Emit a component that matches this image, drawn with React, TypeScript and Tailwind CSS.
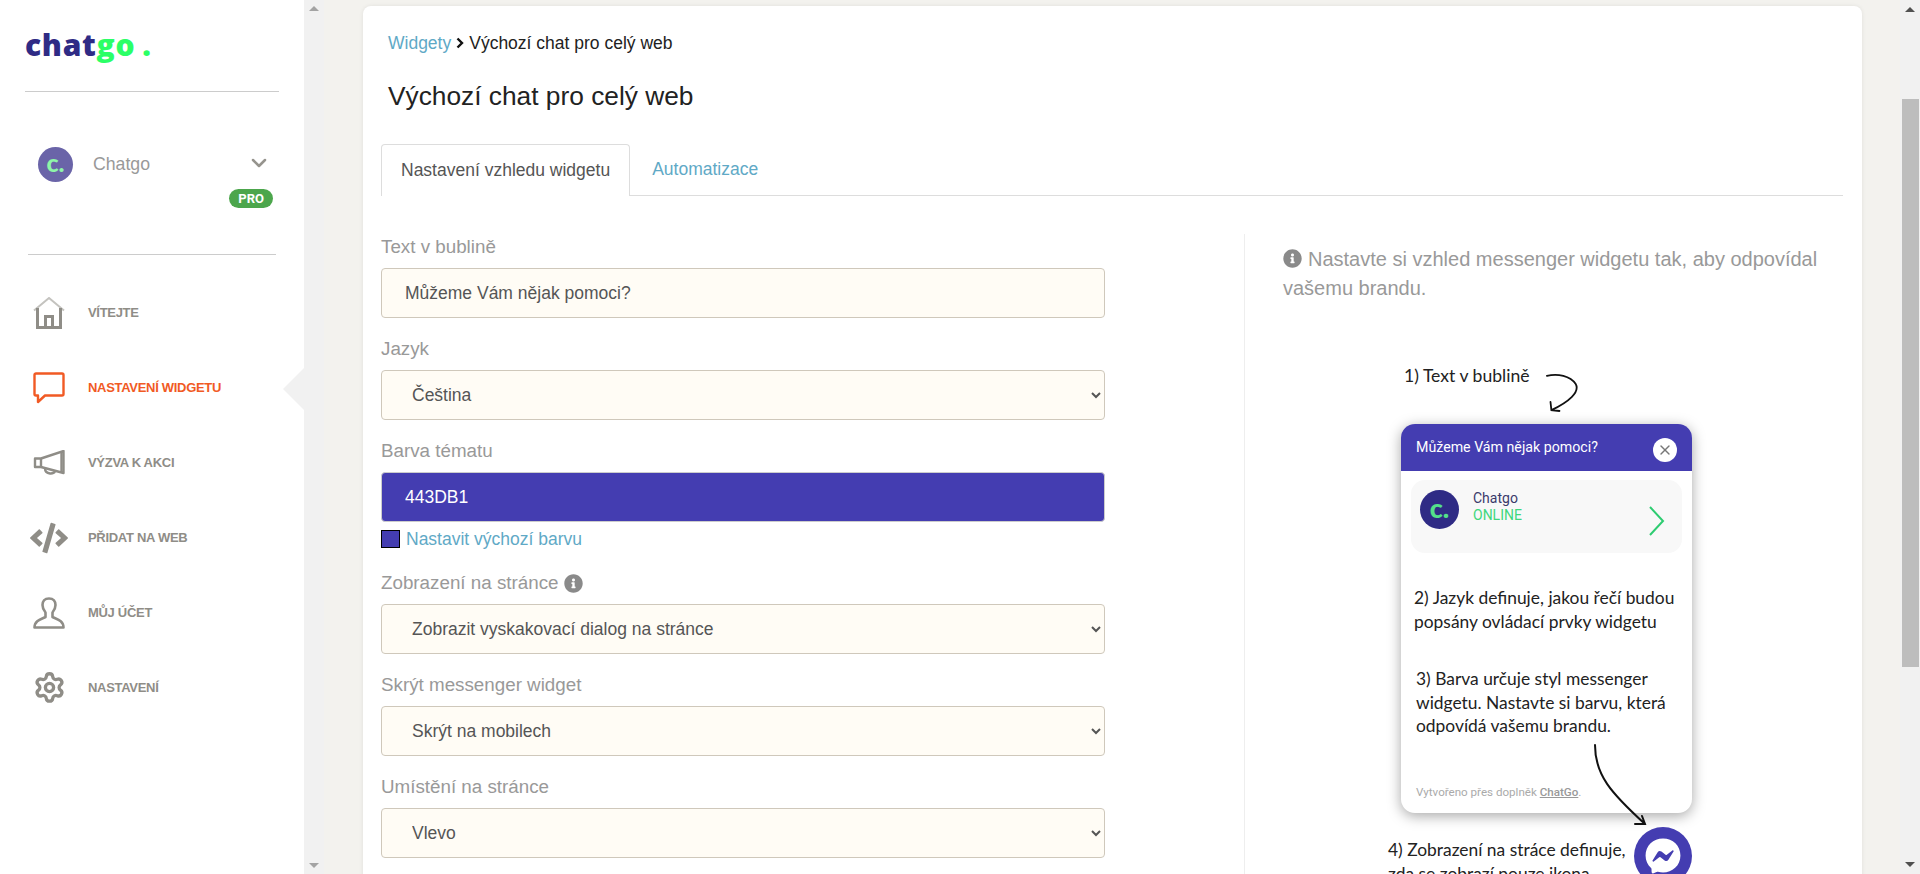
import React from 'react';
import { ChevronDown, Settings, X } from 'lucide-react';
import { FaCode, FaFacebookMessenger, FaInfoCircle } from 'react-icons/fa';

const HomeIcon = ({ className }: { className?: string }) => (
  <svg viewBox="0 0 32 32" className={className} fill="none" stroke="currentColor">
    <path d="M1 13.500 16 1l15 12.500" stroke="#c4c3bf" strokeWidth="2" />
    <path d="M4.500 11v19.500h23V11" strokeWidth="3" />
    <path d="M12.500 30V19.500h7V30" strokeWidth="3" />
  </svg>
);

const BubbleIcon = ({ className }: { className?: string }) => (
  <svg viewBox="0 0 32 32" className={className} fill="none" stroke="currentColor" strokeWidth="2.400">
    <path d="M3 1.500h26a1.500 1.500 0 0 1 1.500 1.500v19a1.500 1.500 0 0 1-1.500 1.500H12L5 30v-6.500H3A1.500 1.500 0 0 1 1.500 22V3A1.500 1.500 0 0 1 3 1.500z" strokeLinejoin="round" />
  </svg>
);

const MegaphoneIcon = ({ className }: { className?: string }) => (
  <svg viewBox="0 0 32 26" className={className} fill="none" stroke="currentColor" strokeWidth="2.400">
    <path d="M30.500 1v22L8 17H2V8.500h6z" strokeLinejoin="round" />
    <path d="M8 8.500V17M28.500 2v20M12 18.500c0 6 10 6.500 10 2" />
  </svg>
);

const UserIcon = ({ className }: { className?: string }) => (
  <svg viewBox="0 0 32 32" className={className} fill="none" stroke="currentColor" strokeWidth="2.600">
    <path d="M16 1.500c-4.500 0-6.500 3-6.500 6.500 0 3 1.300 5.500 3 7.500v4.500C9 22 1.500 23 1.500 30.500h29C30.500 23 23 22 19.500 20v-4.500c1.700-2 3-4.500 3-7.500 0-3.500-2-6.500-6.500-6.500z" strokeLinejoin="round" />
  </svg>
);

const navItems = [
  { label: 'VÍTEJTE', icon: <HomeIcon className="w-8 h-8" /> },
  { label: 'NASTAVENÍ WIDGETU', icon: <BubbleIcon className="w-8 h-8" />, active: true },
  { label: 'VÝZVA K AKCI', icon: <MegaphoneIcon className="w-8 h-[26px]" /> },
  { label: 'PŘIDAT NA WEB', icon: <FaCode className="w-[38px] h-[38px]" /> },
  { label: 'MŮJ ÚČET', icon: <UserIcon className="w-8 h-8" /> },
  { label: 'NASTAVENÍ', icon: <Settings className="w-[33px] h-[33px]" strokeWidth={2.400} /> },
];

const inputClass =
  'w-full h-[50px] pl-[23px] rounded border border-[#cfc8bb] bg-[#fffcf5] text-[17.500px] text-[#555] outline-none';
const selectClass =
  'w-full h-[50px] pl-[26px] pr-1 rounded border border-[#cfc8bb] bg-[#fffcf5] text-[17.500px] text-[#555] outline-none';

const Field = ({ label, hint, children }: { label: string; hint?: boolean; children: React.ReactNode }) => (
  <div className="mb-[18px]">
    <div className="h-[26px] mb-2 flex items-center gap-[6px] text-[18.800px] leading-[26px] text-[#999]">
      {label}
      {hint && <FaInfoCircle className="w-[19px] h-[19px] text-[#8a8a8a]" />}
    </div>
    {children}
  </div>
);

const WidgetPreview = () => (
  <div className="relative h-[640px] mt-[43px] font-['Lato',sans-serif] text-[#222]">
    <div className="absolute left-[121px] top-[18px] text-[17.600px] leading-6 whitespace-nowrap">1) Text v bublině</div>
    <svg viewBox="0 0 40 44" className="absolute left-[263px] top-[27px] w-9 h-10" fill="none" stroke="#111" strokeWidth="2" strokeLinecap="round">
      <path d="M1 3c12-3 26 0 32 9 5 9-8 20-27 29M5 32l1 9 9 1" />
    </svg>

    <div className="absolute left-[118px] top-[78px] w-[291px] h-[389px] rounded-[14px] bg-white shadow-[0_3px_14px_rgba(0,0,0,0.35)] overflow-hidden">
      <div className="h-[47px] bg-[#443db1] flex items-center justify-between pl-[15px] pr-[15px] font-['Roboto',sans-serif] text-[14.200px] text-white">
        Můžeme Vám nějak pomoci?
        <span className="w-6 h-6 mt-1 rounded-full bg-white flex items-center justify-center">
          <X className="w-4 h-4 text-[#777]" />
        </span>
      </div>
      <div className="mx-[10px] mt-[9px] h-[73px] rounded-[14px] bg-[#f8f8f8] flex pl-[9px] pt-[10px] font-['Roboto',sans-serif]">
        <span className="w-[39px] h-[39px] rounded-full bg-[#2f2b85] flex items-center justify-center text-[#54e08a] text-[27px] leading-none pb-1 font-black font-['Lato',sans-serif]">c.</span>
        <div className="ml-[14px] text-[14px] leading-[17px]">
          <div className="text-[#3b3a6b]">Chatgo</div>
          <div className="text-[#3fd77c]">ONLINE</div>
        </div>
        <svg viewBox="0 0 16 30" className="ml-auto mr-[17px] mt-[16px] w-4 h-[30px]" fill="none" stroke="#2ecc71" strokeWidth="2">
          <path d="M1 1l13 14L1 29" />
        </svg>
      </div>
      <p className="ml-[13px] mt-[33px] text-[17.400px] leading-[23.500px]">
        2) Jazyk definuje, jakou řečí budou
        <br />
        popsány ovládací prvky widgetu
      </p>
      <p className="ml-[15px] mt-[34px] text-[17.400px] leading-[23.500px]">
        3) Barva určuje styl messenger
        <br />
        widgetu. Nastavte si barvu, která
        <br />
        odpovídá vašemu brandu.
      </p>
      <div className="ml-[15px] mt-[46px] text-[11.600px] font-['Roboto',sans-serif] text-[#aaa]">
        Vytvořeno přes doplněk <span className="underline text-[#999] font-medium">ChatGo</span>.
      </div>
    </div>

    <svg viewBox="0 0 54 84" className="absolute left-[310px] top-[397px] w-[54px] h-[84px]" fill="none" stroke="#111" strokeWidth="2" strokeLinecap="round">
      <path d="M2 2c0 30 16 48 50 79M42 81h10l-3-8" />
    </svg>

    <div className="absolute left-[105px] top-[492px] text-[17.400px] leading-6 whitespace-nowrap">
      4) Zobrazení na stráce definuje,
      <br />
      zda se zobrazí pouze ikona
    </div>
    <div className="absolute left-[351px] top-[481px] w-[58px] h-[58px] rounded-full bg-[#443db1] flex items-center justify-center">
      <FaFacebookMessenger className="w-9 h-9 text-white" />
    </div>
  </div>
);

export default function App() {
  return (
    <div className="h-[874px] flex overflow-hidden bg-[#f3f2ee] font-['Liberation_Sans',Arial,sans-serif]">
      {/* Sidebar */}
      <aside className="w-[304px] shrink-0 bg-white relative">
        <div className="h-[92px] mx-[25px] border-b border-[#ccc] pt-[17px]">
          <div className="font-['Open_Sans',sans-serif] font-extrabold text-[30px] leading-[56px] tracking-[0.700px] text-[#2f2b85]">
            chat<span className="text-[#2bff66]">go</span>
            <span className="text-[#2bff66] ml-[7px]">.</span>
          </div>
        </div>
        <div className="h-[163px] mx-[28px] border-b border-[#ccc] relative">
          <div className="flex items-center pt-[55px] pl-[10px]">
            <span className="w-[35px] h-[35px] rounded-full bg-[#6a64a8] flex items-center justify-center font-black text-[25px] leading-none pb-1 text-[#8ef5a8] font-['Lato',sans-serif]">c.</span>
            <span className="ml-[20px] text-[17.700px] text-[#999]">Chatgo</span>
            <ChevronDown className="ml-auto mr-[5px] w-6 h-6 -mt-1 text-[#96948e]" strokeWidth={2.500} />
          </div>
          <span className="absolute right-[3px] top-[97px] h-[19px] px-[9px] rounded-full bg-[#4ca64c] text-white text-[13px] leading-[19px] font-bold font-['Roboto',sans-serif]">PRO</span>
        </div>
        <nav className="pt-[20px]">
          {navItems.map((item) => (
            <div key={item.label} className={`h-[75px] flex items-center ${item.active ? 'text-[#f15a24]' : 'text-[#8f8d87]'}`}>
              <span className="w-[88px] pl-[12px] pr-[2px] flex items-center justify-center shrink-0">{item.icon}</span>
              <span className="text-[13px] font-bold tracking-[-0.300px] whitespace-nowrap">{item.label}</span>
            </div>
          ))}
        </nav>
        <div className="absolute right-0 top-[368px] w-0 h-0 border-y-[21px] border-y-transparent border-r-[21px] border-r-[#f1f1f1]" />
      </aside>

      {/* Sidebar scrollbar */}
      <div className="w-5 shrink-0 bg-[#f1f1f1] flex flex-col items-center justify-between py-[6px]">
        <span className="w-0 h-0 border-x-[5px] border-x-transparent border-b-[5px] border-b-[#a3a3a3]" />
        <span className="w-0 h-0 border-x-[5px] border-x-transparent border-t-[5px] border-t-[#a3a3a3]" />
      </div>

      {/* Main */}
      <main className="flex-1 min-w-0 pl-[39px] pr-[38px] pt-[6px]">
        <div className="h-[900px] rounded-lg bg-white shadow-[0_0_4px_rgba(0,0,0,0.08)] pl-[18px] pr-[19px] pt-[22px] overflow-hidden">
          <div className="pl-[7px] flex items-center text-[17.500px] leading-[30px] text-[#222]">
            <span className="text-[#5fa9c6]">Widgety</span>
            <svg viewBox="0 0 8 12" className="w-2 h-3 mx-[5px]" fill="none" stroke="#111" strokeWidth="2.400">
              <path d="M1.500 1.500 6 6l-4.500 4.500" />
            </svg>
            Výchozí chat pro celý web
          </div>
          <h1 className="pl-[7px] mt-[15px] text-[26.300px] leading-[46px] text-[#222]">Výchozí chat pro celý web</h1>

          <div className="mt-[25px] h-[52px] flex border-b border-[#ddd] text-[17.500px]">
            <div className="h-[52px] px-[19px] leading-[50px] border border-b-0 border-[#ddd] rounded-t bg-white text-[#555]">
              Nastavení vzhledu widgetu
            </div>
            <div className="px-[22px] leading-[50px] text-[#5fa9c6]">Automatizace</div>
          </div>

          <div className="flex mt-[38px]">
            <form className="w-[724px] shrink-0">
              <Field label="Text v bublině">
                <input readOnly defaultValue="Můžeme Vám nějak pomoci?" className={inputClass} />
              </Field>
              <Field label="Jazyk">
                <select defaultValue="cs" className={selectClass}>
                  <option value="cs">Čeština</option>
                </select>
              </Field>
              <div>
                <div className="h-[26px] mb-2 text-[18.800px] leading-[26px] text-[#999]">Barva tématu</div>
                <input
                  readOnly
                  defaultValue="443DB1"
                  className="w-full h-[50px] pl-[23px] rounded border border-[#ccc] bg-[#443db1] text-[17.500px] text-white outline-none"
                />
                <div className="mt-[5px] mb-[19px] h-[24px] flex items-center text-[17.500px] text-[#5fa9c6]">
                  <span className="w-[19px] h-[18px] mr-[6px] bg-[#443db1] border border-black" />
                  Nastavit výchozí barvu
                </div>
              </div>
              <Field label="Zobrazení na stránce" hint>
                <select defaultValue="a" className={selectClass}>
                  <option value="a">Zobrazit vyskakovací dialog na stránce</option>
                </select>
              </Field>
              <Field label="Skrýt messenger widget">
                <select defaultValue="a" className={selectClass}>
                  <option value="a">Skrýt na mobilech</option>
                </select>
              </Field>
              <Field label="Umístění na stránce">
                <select defaultValue="a" className={selectClass}>
                  <option value="a">Vlevo</option>
                </select>
              </Field>
            </form>

            <section className="ml-[139px] flex-1 min-w-0 border-l border-[#eee] pl-[38px] pt-[11px]">
              <p className="text-[20px] leading-[29px] text-[#999]">
                <FaInfoCircle className="inline w-[19px] h-[19px] mr-[6px] -mt-1 text-[#8a8a8a]" />
                Nastavte si vzhled messenger widgetu tak, aby odpovídal vašemu brandu.
              </p>
              <WidgetPreview />
            </section>
          </div>
        </div>
      </main>

      {/* Page scrollbar */}
      <div className="w-5 shrink-0 bg-[#f1f1f1] flex flex-col items-center py-[7px]">
        <span className="w-0 h-0 border-x-[5px] border-x-transparent border-b-[5px] border-b-[#505050]" />
        <span className="w-[17px] h-[568px] mt-[87px] bg-[#bdbdbd]" />
        <span className="mt-auto w-0 h-0 border-x-[5px] border-x-transparent border-t-[5px] border-t-[#505050]" />
      </div>
    </div>
  );
}
